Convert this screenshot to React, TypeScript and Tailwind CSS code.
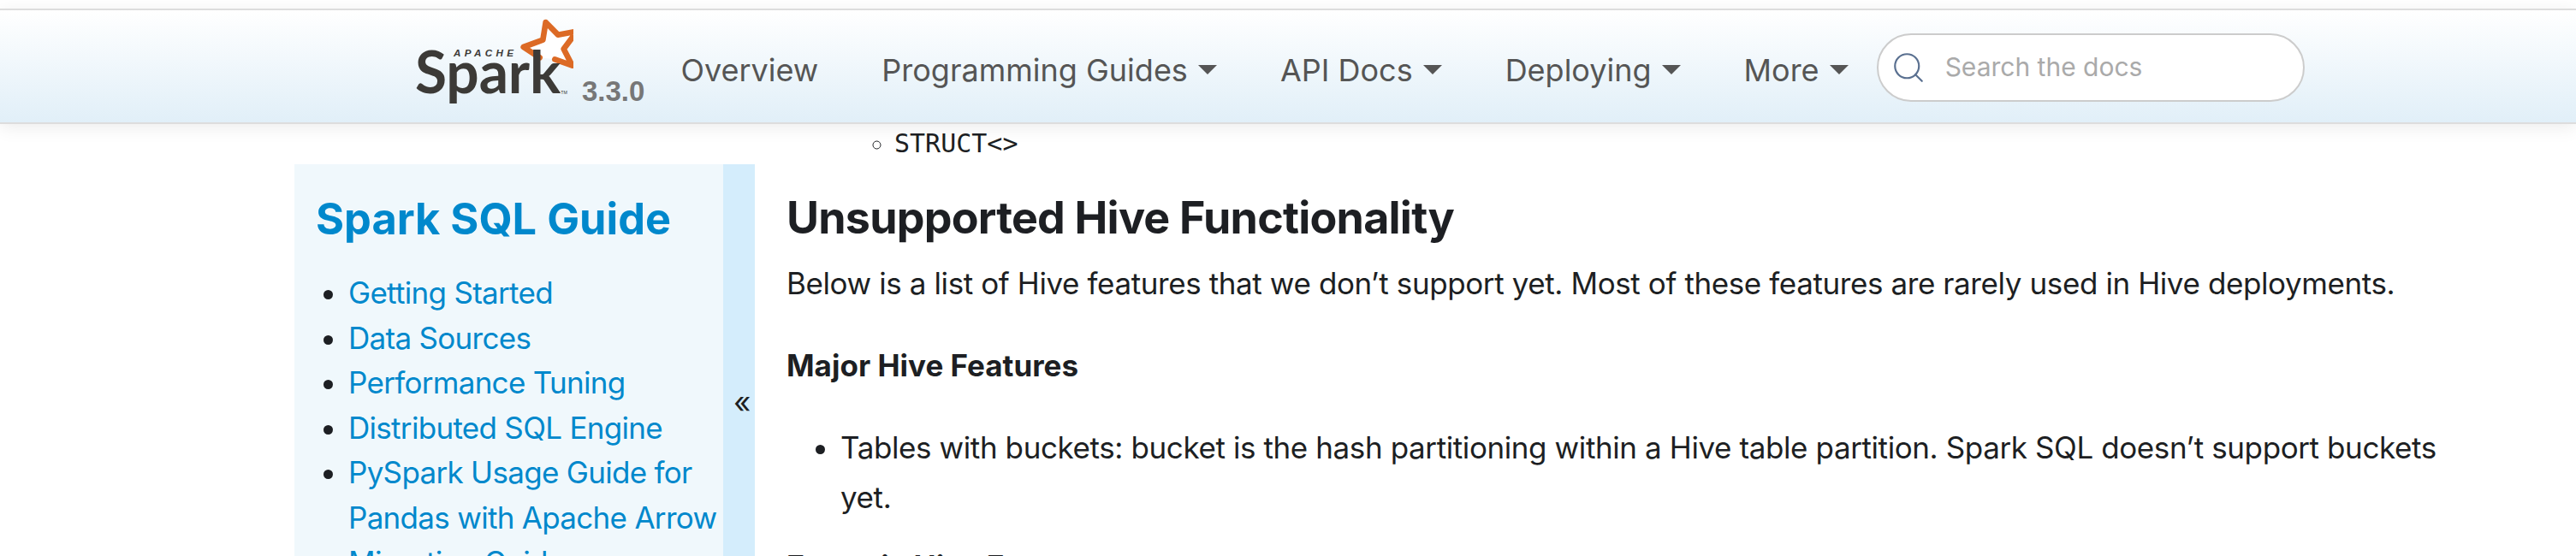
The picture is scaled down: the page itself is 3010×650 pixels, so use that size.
import React from 'react';
import { Search } from 'lucide-react';

const navItems = [
  { label: 'Programming Guides' },
  { label: 'API Docs' },
  { label: 'Deploying' },
  { label: 'More' },
];

const sideLinks = [
  'Getting Started',
  'Data Sources',
  'Performance Tuning',
  'Distributed SQL Engine',
  'PySpark Usage Guide for Pandas with Apache Arrow',
  'Migration Guide',
];

function SparkLogo() {
  return (
    <svg width="200" height="131" viewBox="0 6 600 393" className="shrink-0">
      {/* star */}
      <path
        d="M482 172 L425 135 L493 110 L503 48 L546 92 L612 80 L566 142 L596 200 L535 178"
        fill="#ffffff"
        stroke="#dc6a25"
        strokeWidth="20"
        strokeLinejoin="round"
        strokeLinecap="round"
      />
      <text x="180" y="168" fontFamily="'Liberation Sans', sans-serif" fontWeight="700" fontSize="35" fontStyle="italic" fill="#3c3a37" textLength="210">
        APACHE
      </text>
      <text x="45" y="298" fontFamily="Lato, sans-serif" fontWeight="700" fontSize="205" fill="#3c3a37" textLength="510" lengthAdjust="spacingAndGlyphs">
        Spark
      </text>
      <text x="556" y="300" fontFamily="'Liberation Sans', sans-serif" fontSize="16" fill="#3c3a37">
        TM
      </text>
    </svg>
  );
}

export default function App() {
  return (
    <div className="h-[650px] w-[3010px] overflow-hidden bg-white font-['Inter',sans-serif] text-[35px] tracking-[-0.4px] text-[#1d1f23]">
      <div className="h-[10px]" />
      {/* top navbar */}
      <nav className="relative z-10 flex h-[135px] items-center border-t-2 border-b-2 border-[#dddddd] bg-gradient-to-b from-white to-[#e1eff8] pl-[470px] shadow-[0_4px_20px_rgba(0,0,0,0.08)]">
        <SparkLogo />
        <span className="ml-[10px] self-end pb-[20px] font-['Liberation_Sans',sans-serif] text-[33px] leading-none font-bold tracking-normal text-[#777777]">3.3.0</span>
        <div className="mt-[8px] ml-[42px] flex items-center gap-[74px] text-[36px] tracking-normal text-[#555555]">
          <a>Overview</a>
          {navItems.map((item) => (
            <a key={item.label} className="flex items-center gap-[12px]">
              {item.label}
              <span className="h-0 w-0 border-x-[11px] border-t-[11px] border-x-transparent border-t-[#555555]" />
            </a>
          ))}
        </div>
        <div className="mt-[2px] ml-[33px] flex h-[80px] w-[500px] items-center gap-[22px] rounded-[40px] border-2 border-[#cccccc] bg-white pl-[14px]">
          <Search className="h-[42px] w-[42px] text-[#5a7090]" strokeWidth={1.25} />
          <span className="text-[30px] tracking-normal text-[#aaaaaa]">Search the docs</span>
        </div>
      </nav>

      <div className="flex h-[505px]">
        {/* left menu */}
        <div className="mt-[47px] ml-[344px] flex">
          <div className="w-[501px] bg-[#f0f8fc] pt-[34px] pl-[25px]">
            <h3 className="text-[50.5px] leading-[60px] font-bold tracking-normal text-[#0088cc]">Spark SQL Guide</h3>
            <ul className="mt-[30px] -mr-[8px] list-disc pl-[38px] leading-[52.5px] tracking-[-0.7px] text-[#0088cc] marker:text-[#1d1f23]">
              {sideLinks.map((link) => (
                <li key={link}>{link}</li>
              ))}
            </ul>
          </div>
          <div className="w-[37px] bg-[#d4edfc] pt-[261px] pl-[12px] leading-none">«</div>
        </div>

        {/* main text */}
        <div className="ml-[37px] w-[1980px]">
          <ul className="list-[circle] pl-[126px] font-['DejaVu_Sans_Mono',monospace] text-[30px] leading-[46px] tracking-normal">
            <li>STRUCT&lt;&gt;</li>
          </ul>
          <h2 className="mt-[33px] text-[52px] leading-[62px] font-bold tracking-[-0.8px]">Unsupported Hive Functionality</h2>
          <p className="mt-[16px] leading-[58px]">
            Below is a list of Hive features that we don’t support yet. Most of these features are rarely used in Hive deployments.
          </p>
          <p className="mt-[38px] leading-[58px] font-bold tracking-normal">Major Hive Features</p>
          <ul className="mt-[38px] list-disc pl-[63px] leading-[58px]">
            <li>Tables with buckets: bucket is the hash partitioning within a Hive table partition. Spark SQL doesn’t support buckets yet.</li>
          </ul>
          <p className="mt-[23px] leading-[58px] font-bold tracking-normal">Esoteric Hive Features</p>
        </div>
      </div>
    </div>
  );
}
